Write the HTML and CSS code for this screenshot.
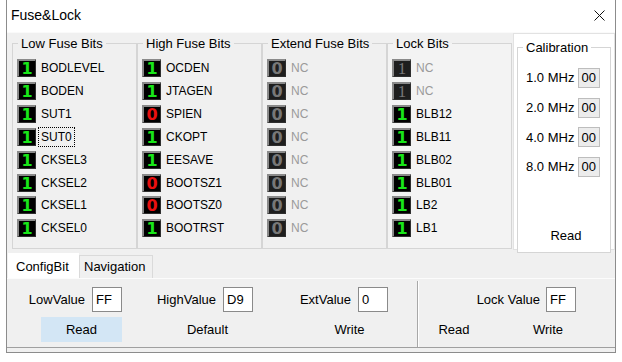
FILE: index.html
```html
<!DOCTYPE html>
<html>
<head>
    <title>Fuse&amp;Lock</title>
    <link rel="stylesheet" href="styles.css">
</head>
<body>

<div class="window">
    <div class="titlebar">
        <span class="title">Fuse&amp;Lock</span>
        <button class="close" title="Close">
            <svg width="11" height="11" viewBox="0 0 11 11">
                <path d="M0.5 0.5 L10.5 10.5 M10.5 0.5 L0.5 10.5" stroke="#111" stroke-width="1" fill="none"/>
            </svg>
        </button>
    </div>

    <div class="client">
        <div class="fuse-area">
            <fieldset class="group">
                <legend>Low Fuse Bits</legend>
                <ul class="bits">
                    <li><span class="bit on">1</span><span class="name">BODLEVEL</span></li>
                    <li><span class="bit on">1</span><span class="name">BODEN</span></li>
                    <li><span class="bit on">1</span><span class="name">SUT1</span></li>
                    <li><span class="bit on">1</span><span class="name focused">SUT0</span></li>
                    <li><span class="bit on">1</span><span class="name">CKSEL3</span></li>
                    <li><span class="bit on">1</span><span class="name">CKSEL2</span></li>
                    <li><span class="bit on">1</span><span class="name">CKSEL1</span></li>
                    <li><span class="bit on">1</span><span class="name">CKSEL0</span></li>
                </ul>
            </fieldset>

            <fieldset class="group">
                <legend>High Fuse Bits</legend>
                <ul class="bits">
                    <li><span class="bit on">1</span><span class="name">OCDEN</span></li>
                    <li><span class="bit on">1</span><span class="name">JTAGEN</span></li>
                    <li><span class="bit off">0</span><span class="name">SPIEN</span></li>
                    <li><span class="bit on">1</span><span class="name">CKOPT</span></li>
                    <li><span class="bit on">1</span><span class="name">EESAVE</span></li>
                    <li><span class="bit off">0</span><span class="name">BOOTSZ1</span></li>
                    <li><span class="bit off">0</span><span class="name">BOOTSZ0</span></li>
                    <li><span class="bit on">1</span><span class="name">BOOTRST</span></li>
                </ul>
            </fieldset>

            <fieldset class="group">
                <legend>Extend Fuse Bits</legend>
                <ul class="bits">
                    <li><span class="bit dis">0</span><span class="name nc">NC</span></li>
                    <li><span class="bit dis">0</span><span class="name nc">NC</span></li>
                    <li><span class="bit dis">0</span><span class="name nc">NC</span></li>
                    <li><span class="bit dis">0</span><span class="name nc">NC</span></li>
                    <li><span class="bit dis">0</span><span class="name nc">NC</span></li>
                    <li><span class="bit dis">0</span><span class="name nc">NC</span></li>
                    <li><span class="bit dis">0</span><span class="name nc">NC</span></li>
                    <li><span class="bit dis">0</span><span class="name nc">NC</span></li>
                </ul>
            </fieldset>

            <fieldset class="group lock-group">
                <legend>Lock Bits</legend>
                <ul class="bits">
                    <li><span class="bit dis serif">1</span><span class="name nc">NC</span></li>
                    <li><span class="bit dis serif">1</span><span class="name nc">NC</span></li>
                    <li><span class="bit on">1</span><span class="name">BLB12</span></li>
                    <li><span class="bit on">1</span><span class="name">BLB11</span></li>
                    <li><span class="bit on">1</span><span class="name">BLB02</span></li>
                    <li><span class="bit on">1</span><span class="name">BLB01</span></li>
                    <li><span class="bit on">1</span><span class="name">LB2</span></li>
                    <li><span class="bit on">1</span><span class="name">LB1</span></li>
                </ul>
            </fieldset>

            <div class="calib">
                <fieldset class="group cal-group">
                    <legend>Calibration</legend>
                    <div class="cal-row"><label>1.0 MHz</label><input class="cal-input" value="00" readonly></div>
                    <div class="cal-row"><label>2.0 MHz</label><input class="cal-input" value="00" readonly></div>
                    <div class="cal-row"><label>4.0 MHz</label><input class="cal-input" value="00" readonly></div>
                    <div class="cal-row"><label>8.0 MHz</label><input class="cal-input" value="00" readonly></div>
                    <button class="flat cal-read">Read</button>
                </fieldset>
            </div>
        </div>

        <div class="tab-strip">
            <span class="tab active">ConfigBit</span>
            <span class="tab">Navigation</span>
        </div>

        <div class="tab-page">
            <div class="cfg-fuse">
                <div class="field"><label>LowValue</label><input class="value" value="FF"></div>
                <div class="field"><label>HighValue</label><input class="value" value="D9"></div>
                <div class="field"><label>ExtValue</label><input class="value" value="0"></div>
                <button class="flat hover">Read</button>
                <button class="flat default-btn">Default</button>
                <button class="flat write-btn">Write</button>
            </div>
            <div class="cfg-lock">
                <div class="field lock-field"><label>Lock Value</label><input class="value" value="FF"></div>
                <div class="lock-buttons">
                    <button class="flat small">Read</button>
                    <button class="flat small">Write</button>
                </div>
            </div>
        </div>
    </div>
</div>

</body>
</html>
```

FILE: styles.css
```css
:root {
    --face: #f0f0f0;
    --group-border: #d5d5d5;
    --win-border: #8c8c8c;
    --input-border: #8a8a8a;
    --green: #19e619;
    --red: #e81010;
    --nc-text: #9a9a9a;
}

body {
    margin: 0;
    background-color: #ffffff;
    font-family: "Liberation Sans", Arial, sans-serif;
    font-size: 13px;
    color: #000;
}

.window {
    margin-left: 6px;
    width: 610px;
    box-sizing: border-box;
    border-left: 1px solid var(--win-border);
    border-right: 1px solid var(--win-border);
    border-bottom: 1px solid var(--win-border);
}

.titlebar {
    height: 30px;
    background-color: #fff;
    display: flex;
    align-items: center;
    justify-content: space-between;
    padding-left: 4px;
}

.title {
    font-size: 14px;
}

.close {
    width: 32px;
    height: 30px;
    border: none;
    background: none;
    padding: 0;
    display: flex;
    align-items: center;
    justify-content: center;
}

.client {
    background-color: var(--face);
    padding-bottom: 4px;
}

.fuse-area {
    margin-top: 2px;
    border-top: 1px solid #fafafa;
    display: flex;
    align-items: flex-start;
    padding-left: 5px;
}

.group {
    margin: 3px 0 0 0;
    padding: 0 0 0 4px;
    width: 125px;
    height: 213px;
    box-sizing: border-box;
    border: 1px solid var(--group-border);
    min-width: 0;
}

.lock-group {
    background-color: #f3f3f3;
}

.group legend {
    margin-left: 1px;
    padding: 0 3px;
    line-height: 15px;
}

.bits {
    list-style: none;
    margin: 6px 0 0 0;
    padding: 0;
    display: grid;
    grid-auto-rows: 22.85px;
    align-items: center;
}

.bits li {
    display: flex;
    align-items: center;
    gap: 5px;
}

.bit {
    width: 19px;
    height: 18px;
    box-sizing: border-box;
    background-color: #000;
    border-style: solid;
    border-width: 2px 1px 1px 2px;
    border-color: #8a8a8a #2e2e2e #2e2e2e #8a8a8a;
    font-family: "DejaVu Sans", sans-serif;
    font-weight: bold;
    font-size: 16px;
    line-height: 15px;
    text-align: center;
}

.bit.on {
    color: var(--green);
}

.bit.off {
    color: var(--red);
}

.bit.dis {
    background-color: #1e1e1e;
    color: #777;
}

.bit.serif {
    font-family: "Liberation Serif", serif;
    font-weight: normal;
    font-size: 17px;
}

.name {
    font-size: 12px;
}

.name.nc {
    color: var(--nc-text);
}

.name.focused {
    outline: 1px dotted #000;
    outline-offset: 2px;
}

.calib {
    width: 102px;
    height: 217px;
    box-sizing: border-box;
    margin-left: 1px;
    padding: 3px;
    background-color: #fff;
    border: 1px solid #e2e2e2;
}

.cal-group {
    width: 94px;
    padding: 0 0 0 4px;
    display: flex;
    flex-direction: column;
    background-color: #fff;
}

.cal-row {
    height: 29.7px;
    margin-left: 4px;
    display: flex;
    align-items: center;
    gap: 4px;
}

.cal-row:first-of-type {
    margin-top: 8px;
}

.cal-input {
    width: 22px;
    height: 20px;
    box-sizing: border-box;
    padding: 0 0 0 2px;
    border: 1px solid #bdbdbd;
    background-color: #ececec;
    font-family: inherit;
    font-size: 13px;
}

.flat {
    border: none;
    background: none;
    font-family: inherit;
    font-size: 13px;
    color: #000;
    padding: 0;
    cursor: pointer;
}

.cal-read {
    margin: auto 0 7px 0;
    height: 20px;
}

.tab-strip {
    margin-top: 3px;
    height: 25px;
    display: flex;
    align-items: flex-end;
    padding-left: 1px;
}

.tab {
    box-sizing: border-box;
}

.tab.active {
    width: 71px;
    height: 25px;
    background-color: #fff;
    padding: 6px 0 0 8px;
}

.tab:not(.active) {
    width: 74px;
    height: 23px;
    border: 1px solid #dadada;
    border-bottom: none;
    padding: 3px 0 0 4px;
}

.tab-page {
    height: 70px;
    box-sizing: border-box;
    border-top: 1px solid #fcfcfc;
    border-bottom: 1px solid #a0a0a0;
    display: flex;
}

.cfg-fuse {
    width: 411px;
    box-sizing: border-box;
    margin-top: 2px;
    padding-top: 6px;
    border-right: 1px solid #a8a8a8;
    box-shadow: 1px 0 0 #fff;
    display: grid;
    grid-template-columns: 115px 131px 135px;
    grid-template-rows: 25px 25px;
    row-gap: 5px;
    justify-items: end;
}

.field {
    display: flex;
    align-items: center;
    gap: 7px;
}

.value {
    width: 30px;
    height: 25px;
    box-sizing: border-box;
    border: 1px solid var(--input-border);
    background-color: #fff;
    padding: 0 0 0 3px;
    font-family: inherit;
    font-size: 13px;
}

.cfg-fuse .flat {
    width: 81px;
    height: 25px;
}

.flat.hover {
    background-color: #d3e6f5;
}

.default-btn {
    margin-right: 5px;
}

.write-btn {
    margin-right: -2px;
}

.cfg-lock {
    flex: 1;
    padding-top: 8px;
    margin-left: 2px;
    display: flex;
    flex-direction: column;
    gap: 5px;
}

.lock-field {
    justify-content: flex-end;
    gap: 6px;
    padding-right: 39px;
}

.lock-buttons {
    display: flex;
    gap: 34px;
    padding-left: 4px;
}

.flat.small {
    width: 60px;
    height: 25px;
}
```
